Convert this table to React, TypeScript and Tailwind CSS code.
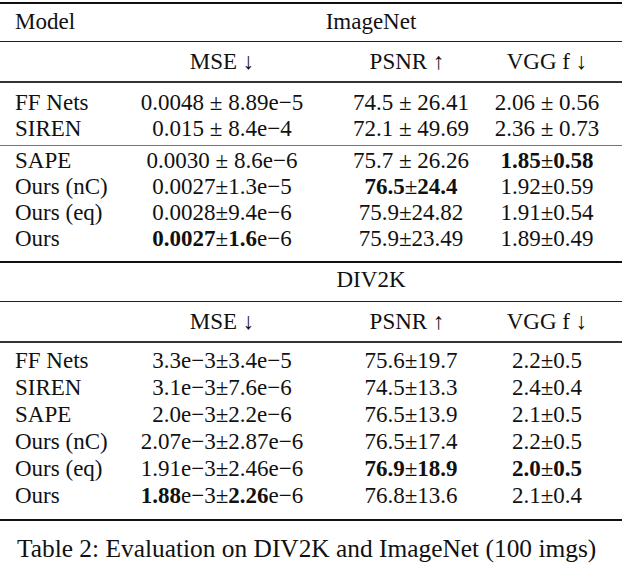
import type { ReactNode } from 'react'

type Row = { model: string; mse: ReactNode; psnr: ReactNode; vgg: ReactNode }

const grid = 'grid grid-cols-[130px_184px_194px_114px] items-center whitespace-nowrap'

const imagenetA: Row[] = [
  { model: 'FF Nets', mse: '0.0048 ± 8.89e−5', psnr: '74.5 ± 26.41', vgg: '2.06 ± 0.56' },
  { model: 'SIREN', mse: '0.015 ± 8.4e−4', psnr: '72.1 ± 49.69', vgg: '2.36 ± 0.73' },
]

const imagenetB: Row[] = [
  { model: 'SAPE', mse: '0.0030 ± 8.6e−6', psnr: '75.7 ± 26.26', vgg: <><b>1.85</b>±<b>0.58</b></> },
  { model: 'Ours (nC)', mse: '0.0027±1.3e−5', psnr: <><b>76.5</b>±<b>24.4</b></>, vgg: '1.92±0.59' },
  { model: 'Ours (eq)', mse: '0.0028±9.4e−6', psnr: '75.9±24.82', vgg: '1.91±0.54' },
  { model: 'Ours', mse: <><b>0.0027</b>±<b>1.6</b>e−6</>, psnr: '75.9±23.49', vgg: '1.89±0.49' },
]

const div2k: Row[] = [
  { model: 'FF Nets', mse: '3.3e−3±3.4e−5', psnr: '75.6±19.7', vgg: '2.2±0.5' },
  { model: 'SIREN', mse: '3.1e−3±7.6e−6', psnr: '74.5±13.3', vgg: '2.4±0.4' },
  { model: 'SAPE', mse: '2.0e−3±2.2e−6', psnr: '76.5±13.9', vgg: '2.1±0.5' },
  { model: 'Ours (nC)', mse: '2.07e−3±2.87e−6', psnr: '76.5±17.4', vgg: '2.2±0.5' },
  { model: 'Ours (eq)', mse: '1.91e−3±2.46e−6', psnr: <><b>76.9</b>±<b>18.9</b></>, vgg: <><b>2.0</b>±<b>0.5</b></> },
  { model: 'Ours', mse: <><b>1.88</b>e−3±<b>2.26</b>e−6</>, psnr: '76.8±13.6', vgg: '2.1±0.4' },
]

function DataRow({ row, h }: { row: Row; h: string }) {
  return (
    <div className={`${grid} ${h}`}>
      <div className="pl-[15px]">{row.model}</div>
      <div className="flex justify-center">
        <span>{row.mse}</span>
      </div>
      <div className="flex justify-center">
        <span>{row.psnr}</span>
      </div>
      <div className="flex justify-center pr-[36px]">
        <span>{row.vgg}</span>
      </div>
    </div>
  )
}

function MetricHeader() {
  return (
    <div className={`${grid} h-[39px]`}>
      <div />
      <div className="flex justify-center">MSE ↓</div>
      <div className="flex justify-center pr-[8px]">PSNR ↑</div>
      <div className="flex justify-center pr-[36px]">VGG f ↓</div>
    </div>
  )
}

export default function App() {
  return (
    <div className="w-[622px] h-[566px] bg-white text-[#111] [font-family:Liberation_Serif,serif] text-[23px] leading-none">
      <div className="h-[2px] mt-[2px] bg-[#111]" />

      {/* ImageNet block */}
      <div className={`${grid} h-[37px] pb-[3px]`}>
        <div className="pl-[15px]">Model</div>
        <div className="col-span-3 text-center pr-[10px]">ImageNet</div>
      </div>
      <div className="h-px bg-[#222]" />
      <MetricHeader />
      <div className="h-[2px] bg-[#333]" />
      <div className="pt-[6px] pb-[4px]">
        {imagenetA.map((r) => (
          <DataRow key={r.model} row={r} h="h-[26px]" />
        ))}
      </div>
      <div className="h-px bg-[#777]" />
      <div className="pt-[1px] pb-[10px]">
        {imagenetB.map((r) => (
          <DataRow key={r.model} row={r} h="h-[26px]" />
        ))}
      </div>
      <div className="h-[2px] bg-[#111]" />

      {/* DIV2K block */}
      <div className={`${grid} h-[38px] pb-[5px]`}>
        <div />
        <div className="col-span-3 text-center pr-[10px]">DIV2K</div>
      </div>
      <div className="h-px bg-[#222]" />
      <MetricHeader />
      <div className="h-[2px] bg-[#333]" />
      <div className="pt-[4px] pb-[10px]">
        {div2k.map((r) => (
          <DataRow key={r.model} row={r} h="h-[27px]" />
        ))}
      </div>
      <div className="h-[2px] bg-[#111]" />

      <div className="pt-[15px] pl-[17px] text-[25.4px] whitespace-nowrap">Table 2: Evaluation on DIV2K and ImageNet (100 imgs)</div>
    </div>
  )
}
